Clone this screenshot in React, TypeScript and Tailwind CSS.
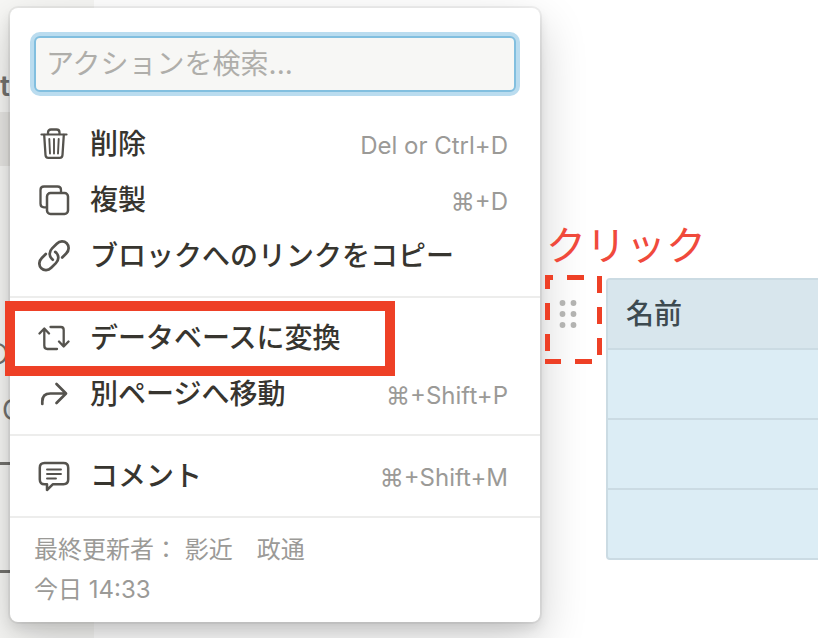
import React from "react";

type Item = { label: string; shortcut?: string; icon: React.ReactNode };

const Icon = ({ children }: { children: React.ReactNode }) => (
  <svg
    aria-hidden="true"
    viewBox="0 0 32 32"
    className="h-8 w-8 shrink-0"
    fill="none"
    stroke="#55534e"
    strokeWidth="2.7"
    strokeLinecap="round"
    strokeLinejoin="round"
  >
    {children}
  </svg>
);

const TrashIcon = () => (
  <Icon>
    <path d="M3.5 6.5H28.5" strokeWidth="2.2" />
    <path d="M10 6V4.5Q10 1.500 13 1.500H18.500Q21.500 1.500 21.500 4.500V6" strokeWidth="2.300" />
    <path d="M6.200 7L7.500 27Q7.700 29.800 10.200 29.800H21.800Q24.300 29.800 24.500 27L25.800 7" strokeWidth="2.300" />
    <path d="M11.300 11L12 25.500M16 11V25.500M20.700 11L20 25.500" strokeWidth="1.900" />
  </Icon>
);

const DuplicateIcon = () => (
  <Icon>
    <path d="M8 23.300H6Q2.500 23.300 2.500 19.800V6Q2.500 2.500 6 2.500H19.500Q23 2.500 23 6V8" strokeWidth="2.300" />
    <rect x="9" y="9" width="21" height="21" rx="3.500" strokeWidth="2.500" />
  </Icon>
);

const LinkIcon = () => (
  <Icon>
    <path d="M7.800 14L3.800 18C.500 21.300.700 25.700 3.300 28.300C5.900 30.800 10.200 30.800 13.200 27.800L17.900 23.100C21 20 21 15.600 18.400 12.900L17.200 11.900" />
    <path d="M24.200 17.500L28.200 13.500C31.500 10.200 31.200 5.900 28.700 3.300C26.100.700 21.800.700 18.800 3.700L14.100 8.400C11 11.500 11 15.900 13.600 18.600L14.800 19.700" />
  </Icon>
);

const ConvertIcon = () => (
  <Icon>
    <path d="M1.500 11.500L6.300 6.500L11 11.500M6.300 7V23.500Q6.300 27 9.300 27H19" strokeWidth="2.300" />
    <path d="M21 19.500L25.700 24.500L30.500 19.500M25.700 24V8Q25.700 5 22.900 5H12.500" strokeWidth="2.300" />
  </Icon>
);

const MoveIcon = () => (
  <Icon>
    <path d="M4.300 26V23.500Q4.300 15.500 12.300 15.500H27M18.500 6L28 15.500L18.500 25" />
  </Icon>
);

const CommentIcon = () => (
  <Icon>
    <path
      d="M6.500 3H25.500Q30.200 3 30.200 7.700V19.500Q30.200 24.200 25.500 24.200H15L9 30V24.200H6.500Q1.800 24.200 1.800 19.500V7.700Q1.800 3 6.500 3Z"
      strokeWidth="2.500"
    />
    <path d="M9 9.500H23M9 14H23M9 18.500H18" strokeWidth="1.900" />
  </Icon>
);

const groups: Item[][] = [
  [
    { label: "削除", shortcut: "Del or Ctrl+D", icon: <TrashIcon /> },
    { label: "複製", shortcut: "⌘+D", icon: <DuplicateIcon /> },
    { label: "ブロックへのリンクをコピー", icon: <LinkIcon /> },
  ],
  [
    { label: "データベースに変換", icon: <ConvertIcon /> },
    { label: "別ページへ移動", shortcut: "⌘+Shift+P", icon: <MoveIcon /> },
  ],
  [{ label: "コメント", shortcut: "⌘+Shift+M", icon: <CommentIcon /> }],
];

function MenuRow({ label, shortcut, icon }: Item) {
  return (
    <button type="button" className="flex h-14 w-full items-center gap-5 pr-8 pl-7 text-left">
      {icon}
      <span className="flex-1 text-[28px] leading-10 font-medium whitespace-nowrap text-[#37352f]">{label}</span>
      {shortcut && <kbd className="pt-1 font-[inherit] text-2xl text-[#9b9a97]">{shortcut}</kbd>}
    </button>
  );
}

function ActionMenu() {
  return (
    <div className="absolute top-2 left-[10px] w-[530px] rounded-lg bg-white shadow-[0_0_0_2px_rgba(15,15,15,0.05),0_6px_12px_rgba(15,15,15,0.1),0_18px_48px_rgba(15,15,15,0.2)]">
      <div className="px-6 pt-7 pb-6">
        <input
          type="text"
          aria-label="アクションを検索"
          placeholder="アクションを検索..."
          className="block h-14 w-full rounded-md border-2 border-[#82bfdf] bg-[#f7f7f5] px-2.5 text-[28px] text-[#37352f] ring-4 ring-[#badcef] outline-none placeholder:text-[#afaeaa]"
        />
      </div>
      {groups.map((items, i) => (
        <div key={i} className={i === 0 ? "border-b-2 border-[#ededec] pb-3" : "border-b-2 border-[#ededec] py-3"}>
          {items.map((item) => (
            <MenuRow key={item.label} {...item} />
          ))}
        </div>
      ))}
      <div className="px-6 py-3 text-2xl leading-10 text-[#9b9a97]">
        <p>最終更新者： 影近　政通</p>
        <p>今日 14:33</p>
      </div>
    </div>
  );
}

function Sidebar() {
  return (
    <aside className="flex w-[94px] shrink-0 flex-col bg-[#f7f7f5] pt-[66px] text-[28px] leading-10 text-[#73726e]">
      <p className="flex w-2.5 justify-end font-semibold">t</p>
      <div className="mt-1.5 h-[54px] bg-[#e8e7e4]" />
      <p className="mt-[168px] flex w-2.5 justify-end">の</p>
      <p className="mt-4 pl-0.5">C</p>
      <div className="mt-8 h-[3px] w-4 bg-[#73726e]" />
      <div className="mt-[105px] h-[3px] w-4 bg-[#73726e]" />
    </aside>
  );
}

export default function App() {
  return (
    <div className="relative flex h-screen overflow-hidden bg-white font-['Inter','Noto_Sans_CJK_JP',sans-serif]">
      <Sidebar />
      <main className="flex-1 pt-[278px] pl-[512px]">
        <div className="-mr-4 overflow-hidden rounded-[4px] border-2 border-[#cbdbe3] bg-[#dcedf5]">
          <table className="w-full border-separate border-spacing-0 text-left">
            <thead>
              <tr>
                <th scope="col" className="h-[70px] border-b-2 border-[#cbdbe3] bg-[#d8e6ed] px-[18px] py-0 text-[28px] leading-10 font-medium whitespace-nowrap text-[#3d4a50]">名前</th>
              </tr>
            </thead>
            <tbody>
              <tr><td className="h-[70px] border-b-2 border-[#cbdbe3]" /></tr>
              <tr><td className="h-[70px] border-b-2 border-[#cbdbe3]" /></tr>
              <tr><td className="h-[68px]" /></tr>
            </tbody>
          </table>
        </div>
      </main>
      <ActionMenu />
      <button type="button" aria-label="ドラッグ" className="absolute top-[298px] left-[556px] h-8 w-6">
        <svg viewBox="0 0 24 32" className="h-8 w-6" fill="#b3b3b1">
          <circle cx="6.500" cy="5" r="2.900" /><circle cx="17.500" cy="5" r="2.900" />
          <circle cx="6.500" cy="16" r="2.900" /><circle cx="17.500" cy="16" r="2.900" />
          <circle cx="6.500" cy="27" r="2.900" /><circle cx="17.500" cy="27" r="2.900" />
        </svg>
      </button>
      <div className="pointer-events-none absolute top-[301px] left-[5px] h-[75px] w-[390px] border-[10px] border-[#ee4026]" />
      <svg aria-hidden="true" viewBox="0 0 57 89" className="pointer-events-none absolute top-[275px] left-[545px] h-[89px] w-[57px]" fill="#ee4026">
        <path d="M0 0H8V5H5V14H0ZM22 0H39V5H22ZM52 1H57V18H52ZM52 32H57V49H52ZM52 63H57V80H52ZM0 28H5V45H0ZM0 59H5V76H0ZM0 84H16V89H0ZM30 84H47V89H30Z" />
      </svg>
      <p className="absolute top-[222px] left-[546px] text-[40px] leading-[48px] whitespace-nowrap text-[#f04a3c]">クリック</p>
    </div>
  );
}
